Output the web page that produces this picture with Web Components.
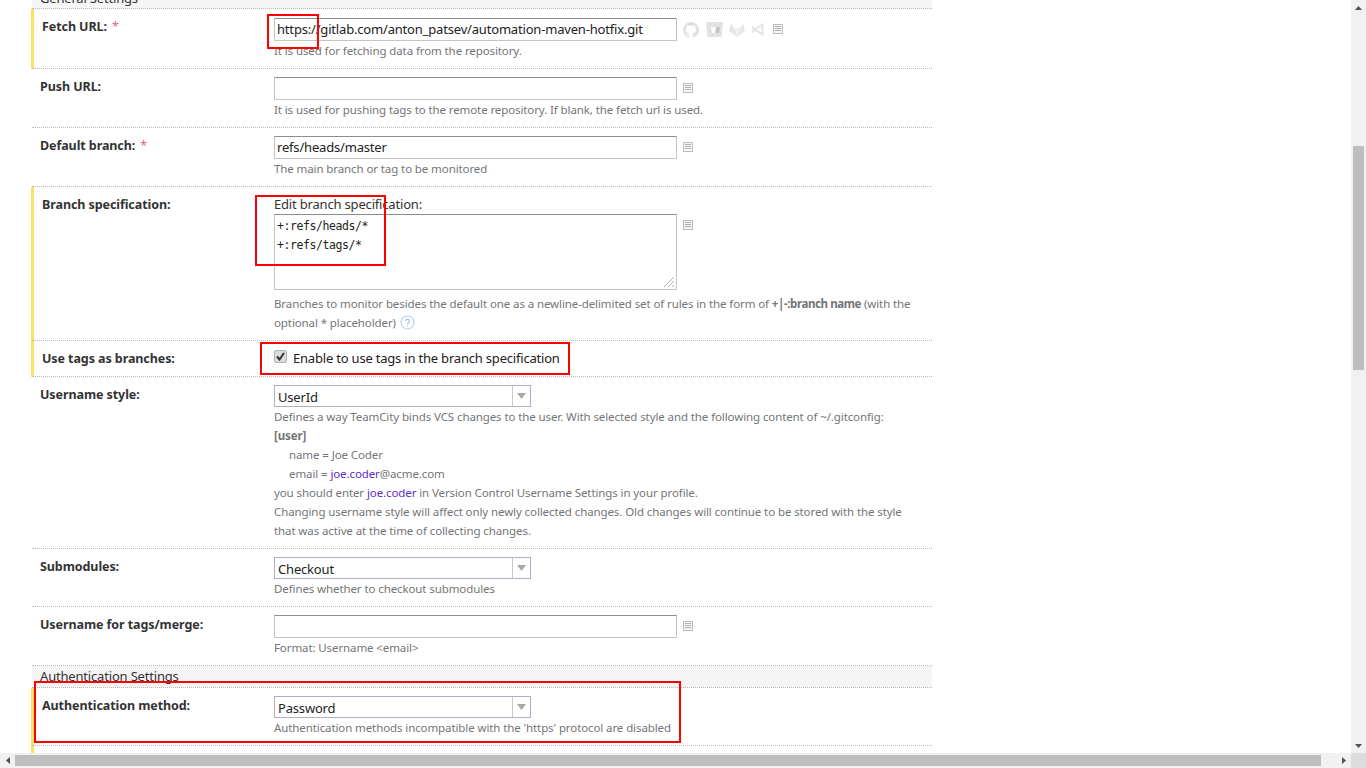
<!DOCTYPE html>
<html><head><meta charset="utf-8">
<style>
html,body{margin:0;padding:0;height:100%;overflow:hidden;background:#fff}
body{font-family:"Noto Sans","Open Sans",sans-serif}
</style></head>
<body>
<template id="t-shell">
<style>
:host{display:grid;grid-template-columns:1fr 15px;grid-template-rows:1fr 15px;width:1366px;height:768px;position:relative;overflow:hidden}
.view{overflow:hidden;min-width:0;min-height:0;padding-left:32px}
.inner{width:900px;margin-top:-14px}
.v{background:#f1f1f1;display:flex;flex-direction:column;align-items:center;position:relative}
.h{background:#f1f1f1;display:flex;align-items:center;position:relative}
.vthumb{width:11px;background:#bebebe;margin-top:131px;height:224px;flex:none}
.hthumb{height:11px;background:#bebebe;width:1306px;flex:none}
.corner{background:#dcdcdc}
.arr{flex:none;width:15px;height:15px;display:flex;align-items:center;justify-content:center}
.sp{flex:1}
</style>
<div class="view"><div class="inner"><slot></slot></div></div>
<div class="v">
<div class="arr"><svg width="7" height="4"><path d="M3.5 0L7 4H0z" fill="#505050"/></svg></div>
<div class="vthumb"></div><div class="sp"></div>
<div class="arr"><svg width="7" height="4"><path d="M0 0H7L3.5 4z" fill="#505050"/></svg></div>
</div>
<div class="h">
<div class="arr"><svg width="4" height="7"><path d="M4 0V7L0 3.5z" fill="#505050"/></svg></div>
<div class="hthumb"></div><div class="sp"></div>
<div class="arr"><svg width="4" height="7"><path d="M0 0V7L4 3.5z" fill="#505050"/></svg></div>
</div>
<div class="corner"></div>
<slot name="over"></slot>
</template>

<template id="t-heading">
<style>
:host{display:block;background:#f5f5f5;border-bottom:1px dotted #bbb;font-size:13px;letter-spacing:-.18px;color:#333;padding:0 8px;box-sizing:border-box;line-height:18px;height:22px;padding-top:1px}
:host([first]){height:23px;padding-top:3px}
</style><slot></slot>
</template>

<template id="t-row">
<style>
:host{display:grid;grid-template-columns:242px 1fr;background:#fff;border-bottom:1px dotted #bbb;box-sizing:border-box;font-size:11.5px;letter-spacing:-.1px;line-height:19px;color:#737577}
:host([mod]){box-shadow:-1px 0 0 #f7e463,inset 2px 0 0 #f7e463}
.l{padding:9px 0 0 8px;font-size:12.5px;letter-spacing:-.08px;font-weight:700;color:#333;line-height:18px}
:host([mod]) .l{padding-left:10px}
.f{padding:8px 10px 0 0;min-width:0}
.req{color:#e8638a;font-weight:400;margin-left:5px}
</style>
<div class="l"><slot name="label"></slot><span class="req" id="r">*</span></div>
<div class="f"><slot></slot></div>
</template>

<template id="t-input">
<style>
:host{display:flex;align-items:center;gap:6px;height:23px;letter-spacing:-.18px}
.box{width:403px;height:23px;box-sizing:border-box;border:1px solid #c4c4c4;border-top-color:#8e8e8e;background:#fff;padding:0 2px;font-size:13px;line-height:20px;color:#222;white-space:nowrap;overflow:hidden}
.tail{display:flex;align-items:center}
</style>
<div class="box"><slot></slot></div><div class="tail"><slot name="tail"></slot></div>
</template>

<template id="t-note-icon">
<style>:host{display:inline-flex;width:10px;height:10px;position:relative;top:-1px}svg{display:block}</style>
<svg width="10" height="10" viewBox="0 0 10 10"><rect x=".5" y=".5" width="9" height="9" fill="#f6f6f6" stroke="#bcbcbc"/><path d="M2 2.500H8M2 4.500H8M2 6.500H8" stroke="#b0b0b0" stroke-width="1"/></svg>
</template>

<template id="t-select">
<style>
:host{display:flex;width:257px;height:22px;box-sizing:border-box;border:1px solid #b2adc8;background:#fff;font-size:13px;letter-spacing:-.18px;color:#222;line-height:22px}
.v{flex:1;padding-left:3px}
.b{width:17px;border-left:1px solid #c9c5d8;display:flex;align-items:center;justify-content:center}
</style>
<div class="v"><slot></slot></div>
<div class="b"><svg width="9" height="6"><path d="M0 0H9L4.5 6z" fill="#a8a8a8"/></svg></div>
</template>

<template id="t-redbox">
<style>:host{display:block;position:absolute;border:2px solid #f00;box-sizing:border-box;pointer-events:none}</style>
</template>

<script>
function def(name,tid,extra){
  customElements.define(name,class extends HTMLElement{
    constructor(){super();const s=this.attachShadow({mode:'open'});s.appendChild(document.getElementById(tid).content.cloneNode(true));if(extra)extra(this,s);}
    connectedCallback(){if(name==='tc-row'&&!this.hasAttribute('required'))this.shadowRoot.getElementById('r').remove();}
  });
}
def('tc-shell','t-shell');
def('tc-heading','t-heading');
def('tc-row','t-row');
def('tc-input','t-input');
def('tc-note-icon','t-note-icon');
def('tc-select','t-select');
def('tc-redbox','t-redbox');
</script>

<style>
.hint{display:block;margin-top:0;white-space:nowrap}
.mono{font-family:"DejaVu Sans Mono",monospace;font-size:11.5px;letter-spacing:-.42px;line-height:19px;color:#222}
a{color:#5f2bd0;text-decoration:none}
b{font-weight:700}
.hint b{letter-spacing:-.4px}
.vcs{display:inline-flex;align-items:center;gap:6px}
.area{position:relative;width:403px;height:76px;box-sizing:border-box;border:1px solid #c4c4c4;border-top-color:#8e8e8e;padding:2px 2px}
.areawrap{display:flex;gap:6px;align-items:flex-start;margin-top:1px}
.edit{color:#333;font-size:13px;letter-spacing:-.18px;line-height:18px;display:block}
.check{display:flex;align-items:center;gap:6px;color:#222;font-size:13px;letter-spacing:-.2px;height:18px}
.cb{width:11px;height:11px;background:#dcdcdc;border:1px solid #b5b5b5;border-radius:2px;display:flex;align-items:center;justify-content:center;flex:none;position:relative;top:-2px}
.grip{position:absolute;right:1px;bottom:1px}
.q{display:inline-block;vertical-align:-3px;margin-left:1px}
.ind{padding-left:15px}
</style>
<tc-shell>
  <tc-heading first>General Settings</tc-heading>
  <tc-row mod required style="height:60px"><span slot="label">Fetch URL:</span>
    <tc-input style="margin-top:1px">https://gitlab.com/anton_patsev/automation-maven-hotfix.git
      <span slot="tail" class="vcs">
        <svg width="16" height="16" viewBox="0 0 16 16"><path fill="#e0e0e0" d="M8 0a8 8 0 0 0-2.500 15.600c.4.1.5-.2.5-.4v-1.400c-2.200.5-2.700-1-2.700-1-.4-.9-.9-1.200-.9-1.200-.7-.5.1-.5.1-.5.8.1 1.200.8 1.200.8.7 1.200 1.900.9 2.300.7.1-.5.3-.9.5-1.100-1.800-.2-3.700-.9-3.700-4 0-.9.3-1.600.8-2.100-.1-.2-.4-1 .1-2.100 0 0 .7-.2 2.200.8a7.600 7.600 0 0 1 4 0c1.500-1 2.200-.8 2.200-.8.4 1.100.2 1.900.1 2.100.5.6.8 1.300.8 2.100 0 3.100-1.900 3.700-3.700 4 .3.300.6.800.6 1.500v2.200c0 .2.100.5.600.4A8 8 0 0 0 8 0z"/></svg>
        <svg width="17" height="15" viewBox="0 0 17 15" style="margin-left:1px"><path fill="#e2e2e2" d="M0 0H17L15.500 15H1.500z"/><path fill="#fdfdfd" d="M5 5H12L11 11H6z"/><path fill="#c4c4c4" d="M10 5H14L13 11H9z"/></svg>
        <svg width="16" height="15" viewBox="0 0 16 15"><path fill="#e6e6e6" d="M8 15L0 9 2 1 4.500 6H11.500L14 1 16 9z"/><path fill="#f0f0f0" d="M8 15L4.500 6H11.500z"/></svg>
        <svg width="14" height="13" viewBox="0 0 14 13"><path fill="none" stroke="#e4e4e4" stroke-width="2" d="M1 4L4 6.500 1 9.500M4 6.500L11.500 1.500V11.500L4 6.500"/></svg>
        <tc-note-icon style="margin-left:2px"></tc-note-icon>
      </span>
    </tc-input>
    <span class="hint">It is used for fetching data from the repository.</span>
  </tc-row>
  <tc-row style="height:59px"><span slot="label">Push URL:</span>
    <tc-input><tc-note-icon slot="tail"></tc-note-icon></tc-input>
    <span class="hint">It is used for pushing tags to the remote repository. If blank, the fetch url is used.</span>
  </tc-row>
  <tc-row required style="height:59px"><span slot="label">Default branch:</span>
    <tc-input>refs/heads/master<tc-note-icon slot="tail"></tc-note-icon></tc-input>
    <span class="hint">The main branch or tag to be monitored</span>
  </tc-row>
  <tc-row mod style="height:154px"><span slot="label">Branch specification:</span>
    <span class="edit">Edit branch specification:</span>
    <div class="areawrap"><div class="area mono">+:refs/heads/*<br>+:refs/tags/*
      <svg class="grip" width="12" height="12" viewBox="0 0 12 12"><path d="M1 11L11 1M5 11L11 5M9 11L11 9" stroke="#b0b0b0" fill="none"/></svg></div>
      <tc-note-icon style="margin-top:7px"></tc-note-icon></div>
    <span class="hint" style="white-space:normal;margin-top:4px">Branches to monitor besides the default one as a newline-delimited set of rules in the form of <b>+|-:branch name</b> (with the optional * placeholder) <svg class="q" width="15" height="15" viewBox="0 0 15 15"><circle cx="7.500" cy="7.500" r="6.500" fill="none" stroke="#b7d4ec" stroke-width="1.200"/><path d="M5.500 6C5.500 3.800 9.500 3.800 9.500 6C9.500 7.500 7.500 7.500 7.500 9M7.500 10.200V11.500" fill="none" stroke="#9cc2e2" stroke-width="1.100"/></svg></span>
  </tc-row>
  <tc-row mod style="height:36px"><span slot="label">Use tags as branches:</span>
    <div class="check"><span class="cb"><svg width="9" height="9" viewBox="0 0 9 9"><path d="M1 4.500L3.500 7.500 8 1" fill="none" stroke="#333" stroke-width="2"/></svg></span>Enable to use tags in the branch specification</div>
  </tc-row>
  <tc-row style="height:172px"><span slot="label">Username style:</span>
    <tc-select>UserId</tc-select>
    <div style="white-space:nowrap">Defines a way TeamCity binds VCS changes to the user. With selected style and the following content of ~/.gitconfig:<br>
    <b>[user]</b><br>
    <span class="ind">name = Joe Coder</span><br>
    <span class="ind">email = <a>joe.coder</a>@acme.com</span><br>
    you should enter <a>joe.coder</a> in Version Control Username Settings in your profile.<br>
    Changing username style will affect only newly collected changes. Old changes will continue to be stored with the style<br>
    that was active at the time of collecting changes.</div>
  </tc-row>
  <tc-row style="height:58px"><span slot="label">Submodules:</span>
    <tc-select>Checkout</tc-select>
    <div>Defines whether to checkout submodules</div>
  </tc-row>
  <tc-row style="height:59px"><span slot="label">Username for tags/merge:</span>
    <tc-input><tc-note-icon slot="tail"></tc-note-icon></tc-input>
    <span class="hint">Format: Username &lt;email&gt;</span>
  </tc-row>
  <tc-heading>Authentication Settings</tc-heading>
  <tc-row mod style="height:58px"><span slot="label">Authentication method:</span>
    <tc-select>Password</tc-select>
    <div>Authentication methods incompatible with the 'https' protocol are disabled</div>
  </tc-row>
  <tc-row mod style="height:40px"></tc-row>
  <tc-redbox slot="over" style="left:267px;top:14px;width:52px;height:35px"></tc-redbox>
  <tc-redbox slot="over" style="left:255px;top:195px;width:131px;height:71px"></tc-redbox>
  <tc-redbox slot="over" style="left:260px;top:342px;width:310px;height:33px"></tc-redbox>
  <tc-redbox slot="over" style="left:34px;top:681px;width:647px;height:62px"></tc-redbox>
</tc-shell>
</body></html>
